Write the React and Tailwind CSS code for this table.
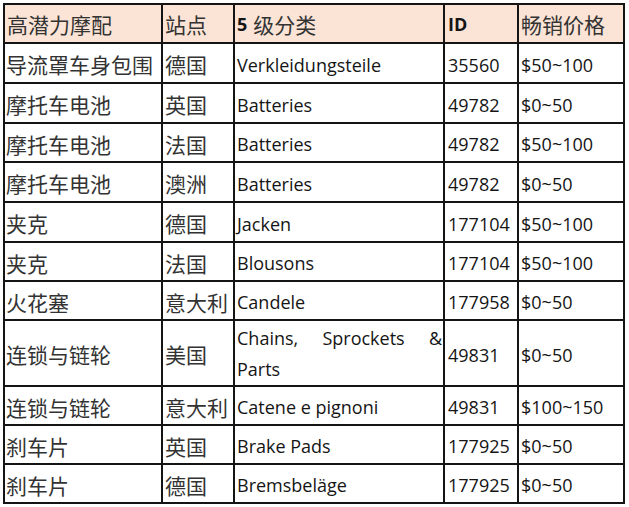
const rows = [
  ["导流罩车身包围", "德国", "Verkleidungsteile", "35560", "$50~100"],
  ["摩托车电池", "英国", "Batteries", "49782", "$0~50"],
  ["摩托车电池", "法国", "Batteries", "49782", "$50~100"],
  ["摩托车电池", "澳洲", "Batteries", "49782", "$0~50"],
  ["夹克", "德国", "Jacken", "177104", "$50~100"],
  ["夹克", "法国", "Blousons", "177104", "$50~100"],
  ["火花塞", "意大利", "Candele", "177958", "$0~50"],
  ["连锁与链轮", "美国", "Chains, Sprockets & Parts", "49831", "$0~50"],
  ["连锁与链轮", "意大利", "Catene e pignoni", "49831", "$100~150"],
  ["刹车片", "英国", "Brake Pads", "177925", "$0~50"],
  ["刹车片", "德国", "Bremsbeläge", "177925", "$0~50"],
];

const zh = "font-['Noto_Sans_CJK_SC',sans-serif] text-[21px] text-[#333]";
const en = "font-['Open_Sans','Noto_Sans_CJK_SC',sans-serif] text-[18px] text-[#151515]";

export default function App() {
  return (
    <div className="min-h-screen bg-white pl-[3px] pt-[3px]">
      <div className="inline-grid grid-cols-[156px_70px_208px_72px_104px] grid-rows-[37px_38px_38px_37px_38px_38px_37px_37px_64px_37px_37px_37px] gap-[2px] bg-[#141414] p-[2px]">
        {/* Header */}
        <div className={`flex items-center bg-[#fbe4d5] pl-[2px] pt-[2px] ${zh}`}>高潜力摩配</div>
        <div className={`flex items-center bg-[#fbe4d5] pl-[2px] pt-[2px] ${zh}`}>站点</div>
        <div className="flex items-center bg-[#fbe4d5] pl-[2px] pt-[2px]">
          <span className={`${en} font-bold`}>5</span>
          <span className={`${zh} ml-[6px]`}>级分类</span>
        </div>
        <div className={`flex items-center bg-[#fbe4d5] pl-[3px] pt-[2px] ${en} font-bold`}>ID</div>
        <div className={`flex items-center bg-[#fbe4d5] pl-[2px] pt-[2px] ${zh}`}>畅销价格</div>

        {rows.map((r, i) => (
          <div key={i} className="contents">
            <div className={`flex items-center bg-white pl-[1px] pt-[4px] ${zh}`}>{r[0]}</div>
            <div className={`flex items-center bg-white pl-[2px] pt-[4px] ${zh}`}>{r[1]}</div>
            {r[2].startsWith("Chains") ? (
              <div className={`flex items-center bg-white pl-[2px] pr-[1px] pt-[2px] ${en}`}>
                <p className="w-full text-justify leading-[31px]">{r[2]}</p>
              </div>
            ) : (
              <div className={`flex items-center bg-white pl-[2px] pt-[4px] ${en}`}>{r[2]}</div>
            )}
            <div className={`flex items-center bg-white pl-[3px] pt-[4px] ${en}`}>{r[3]}</div>
            <div className={`flex items-center bg-white pl-[2px] pt-[4px] ${en}`}>{r[4]}</div>
          </div>
        ))}
      </div>
    </div>
  );
}
